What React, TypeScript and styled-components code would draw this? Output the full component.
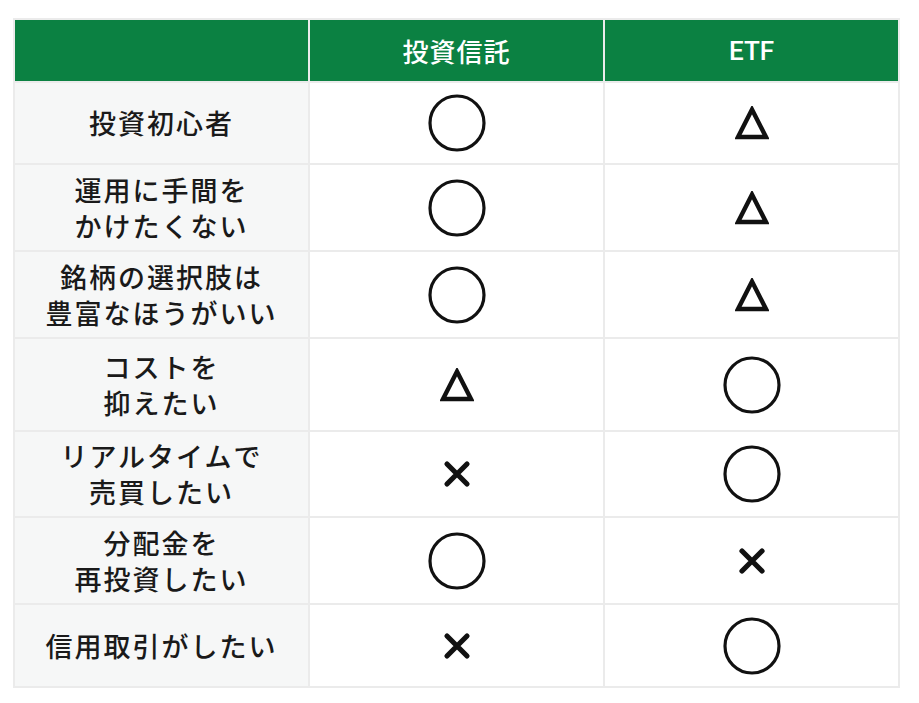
import { Fragment } from "react";
import styled, { createGlobalStyle } from "styled-components";

const GlobalStyle = createGlobalStyle`
  html, body {
    margin: 0;
    padding: 0;
    background: #ffffff;
  }
  body {
    font-family: "Noto Sans CJK JP", "Noto Sans", sans-serif;
  }
`;

const Page = styled.div`
  padding: 18px 0 0 13px;
`;

const Table = styled.div`
  display: grid;
  width: 887px;
  grid-template-columns: repeat(3, 1fr);
  grid-template-rows: 61px 80px 85px 85px 91px 84px 85px 81px;
  gap: 2px;
  padding: 2px;
  box-sizing: border-box;
  background: #ebebeb;
`;

interface ICell {
  variant: "head" | "label" | "value";
}

const Cell = styled.div<ICell>`
  display: flex;
  align-items: center;
  justify-content: center;
  text-align: center;
  background: ${(p) =>
    p.variant === "head" ? "#0b8142" : p.variant === "label" ? "#f6f7f7" : "#ffffff"};
  color: ${(p) => (p.variant === "head" ? "#ffffff" : "#1a1a1a")};
  font-weight: 500;
  font-size: 27px;
  line-height: 36px;
  letter-spacing: 2px;
`;

const HeadText = styled.span`
  font-size: 26px;
  letter-spacing: 1px;
`;

const Latin = styled.span`
  font-family: Roboto, "Liberation Sans", sans-serif;
  font-weight: 500;
  font-size: 26px;
  letter-spacing: 0;
`;

type Mark = "good" | "fair" | "bad";

const Symbol = ({ mark }: { mark: Mark }) => {
  if (mark === "good") {
    return (
      <svg width="58" height="58" viewBox="0 0 58 58">
        <circle cx="29" cy="29" r="27" fill="none" stroke="#111" strokeWidth="3.2" />
      </svg>
    );
  }
  if (mark === "fair") {
    return (
      <svg width="34" height="34" viewBox="0 0 34 34">
        <path d="M17 3.5 L31 31 L3 31 Z" fill="none" stroke="#111" strokeWidth="4.4" strokeLinejoin="miter" />
      </svg>
    );
  }
  return (
    <svg width="28" height="28" viewBox="0 0 28 28">
      <path d="M4 4 L24 24 M24 4 L4 24" stroke="#111" strokeWidth="5.2" strokeLinecap="round" />
    </svg>
  );
};

const rows: { label: string[]; fund: Mark; etf: Mark }[] = [
  { label: ["投資初心者"], fund: "good", etf: "fair" },
  { label: ["運用に手間を", "かけたくない"], fund: "good", etf: "fair" },
  { label: ["銘柄の選択肢は", "豊富なほうがいい"], fund: "good", etf: "fair" },
  { label: ["コストを", "抑えたい"], fund: "fair", etf: "good" },
  { label: ["リアルタイムで", "売買したい"], fund: "bad", etf: "good" },
  { label: ["分配金を", "再投資したい"], fund: "good", etf: "bad" },
  { label: ["信用取引がしたい"], fund: "bad", etf: "good" },
];

const App = () => {
  return (
    <>
      <GlobalStyle />
      <Page>
        <Table>
          <Cell variant="head" />
          <Cell variant="head">
            <HeadText>投資信託</HeadText>
          </Cell>
          <Cell variant="head">
            <Latin>ETF</Latin>
          </Cell>
          {rows.map((row) => (
            <Fragment key={row.label.join("")}>
              <Cell variant="label">
                <div>
                  {row.label.map((line) => (
                    <div key={line}>{line}</div>
                  ))}
                </div>
              </Cell>
              <Cell variant="value">
                <Symbol mark={row.fund} />
              </Cell>
              <Cell variant="value">
                <Symbol mark={row.etf} />
              </Cell>
            </Fragment>
          ))}
        </Table>
      </Page>
    </>
  );
};

export default App;
